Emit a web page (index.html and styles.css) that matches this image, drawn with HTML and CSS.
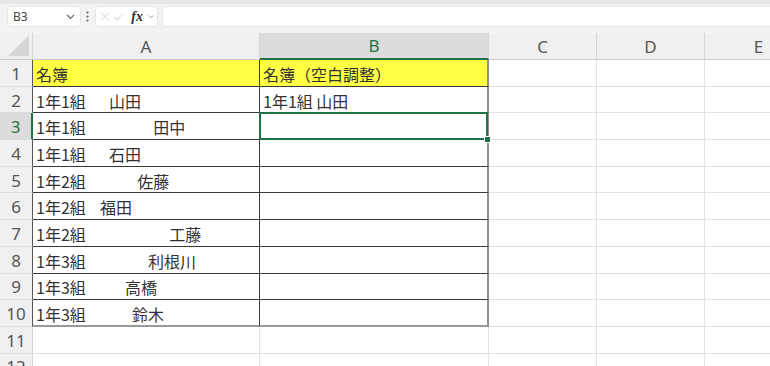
FILE: index.html
```html
<!DOCTYPE html>
<html lang="ja">
<head>
  <meta charset="UTF-8" />
  <title>名簿</title>
  <link rel="stylesheet" href="styles.css">
</head>
<body>

  <!-- Barra de fórmulas -->
  <div class="ribbon-edge"></div>
  <div class="formula-bar">
    <div class="name-box">
      <span>B3</span>
      <svg class="chev" width="9" height="6" viewBox="0 0 9 6"><polyline points="1,1 4.5,4.5 8,1" fill="none" stroke="#666" stroke-width="1.1"/></svg>
    </div>
    <svg class="grip" width="3" height="11" viewBox="0 0 3 11">
      <circle cx="1.5" cy="1.5" r="1.1" fill="#666"/>
      <circle cx="1.5" cy="5.5" r="1.1" fill="#666"/>
      <circle cx="1.5" cy="9.5" r="1.1" fill="#666"/>
    </svg>
    <div class="fx-box">
      <svg width="11" height="11" viewBox="0 0 11 11"><path d="M0.5,0.5 L10.5,10.5 M10.5,0.5 L0.5,10.5" stroke="#c4c4c4" stroke-width="1.1"/></svg>
      <svg width="12" height="10" viewBox="0 0 12 10"><polyline points="0.5,4.5 4.5,9 11.5,0.5" fill="none" stroke="#c4c4c4" stroke-width="1.1"/></svg>
      <span class="fx">fx</span>
      <svg class="chev" width="8" height="6" viewBox="0 0 8 6"><polyline points="1,1 4,4 7,1" fill="none" stroke="#777" stroke-width="1"/></svg>
    </div>
    <div class="formula-input"></div>
  </div>

  <!-- Hoja -->
  <div class="sheet">
    <div class="grid">
      <div class="ch corner"><svg width="21" height="21" viewBox="0 0 21 21"><polygon points="0,21 21,21 21,0" fill="#d6d6d6"/></svg></div>
      <div class="ch">A</div>
      <div class="ch ch-sel">B</div>
      <div class="ch">C</div>
      <div class="ch">D</div>
      <div class="ch">E</div>

      <div class="rh rh-b">1</div>
      <div class="c bx y">名簿</div>
      <div class="c bx bb y">名簿（空白調整）</div>
      <div class="c"></div><div class="c"></div><div class="c"></div>

      <div class="rh rh-b">2</div>
      <div class="c bx">1年1組　  山田</div>
      <div class="c bx bb">1年1組 山田</div>
      <div class="c"></div><div class="c"></div><div class="c"></div>

      <div class="rh rh-b rh-sel">3</div>
      <div class="c bx">1年1組　　　　 田中</div>
      <div class="c bx bb sel"></div>
      <div class="c"></div><div class="c"></div><div class="c"></div>

      <div class="rh rh-b">4</div>
      <div class="c bx">1年1組　  石田</div>
      <div class="c bx bb"></div>
      <div class="c"></div><div class="c"></div><div class="c"></div>

      <div class="rh rh-b">5</div>
      <div class="c bx">1年2組　　　 佐藤</div>
      <div class="c bx bb"></div>
      <div class="c"></div><div class="c"></div><div class="c"></div>

      <div class="rh rh-b">6</div>
      <div class="c bx">1年2組    福田</div>
      <div class="c bx bb"></div>
      <div class="c"></div><div class="c"></div><div class="c"></div>

      <div class="rh rh-b">7</div>
      <div class="c bx">1年2組　　　　　 工藤</div>
      <div class="c bx bb"></div>
      <div class="c"></div><div class="c"></div><div class="c"></div>

      <div class="rh rh-b">8</div>
      <div class="c bx">1年3組　　　    利根川</div>
      <div class="c bx bb"></div>
      <div class="c"></div><div class="c"></div><div class="c"></div>

      <div class="rh rh-b">9</div>
      <div class="c bx">1年3組　　  高橋</div>
      <div class="c bx bb"></div>
      <div class="c"></div><div class="c"></div><div class="c"></div>

      <div class="rh rh-b">10</div>
      <div class="c bx last">1年3組　　    鈴木</div>
      <div class="c bx bb last"></div>
      <div class="c"></div><div class="c"></div><div class="c"></div>

      <div class="rh">11</div>
      <div class="c"></div><div class="c"></div><div class="c"></div><div class="c"></div><div class="c"></div>

      <div class="rh">12</div>
      <div class="c"></div><div class="c"></div><div class="c"></div><div class="c"></div><div class="c"></div>
    </div>
  </div>

</body>
</html>
```

FILE: styles.css
```css
body {
  margin: 0;
  background: #f5f5f5;
  font-family: "Noto Sans", Arial, sans-serif;
  width: 770px;
  height: 366px;
  overflow: hidden;
}

.ribbon-edge {
  height: 4px;
  background: #e4e6e8;
}

.formula-bar {
  height: 29px;
  box-sizing: border-box;
  padding: 2px 0 0 7px;
  display: flex;
  align-items: flex-start;
  background: #f3f3f3;
}

.name-box {
  width: 74px;
  height: 21px;
  box-sizing: border-box;
  background: #fff;
  border: 1px solid #e6e6e6;
  border-radius: 4px;
  display: flex;
  align-items: center;
  justify-content: space-between;
  padding: 0 5px 0 5px;
  font-size: 12px;
  color: #444;
}

.grip {
  margin: 5px 6px 0 5px;
}

.fx-box {
  width: 63px;
  height: 21px;
  box-sizing: border-box;
  background: #fff;
  border: 1px solid #e6e6e6;
  border-radius: 4px;
  display: flex;
  align-items: center;
  gap: 5px;
  padding: 0 3px 0 5px;
}

.fx {
  font-family: "Liberation Serif", serif;
  font-style: italic;
  font-weight: bold;
  font-size: 14px;
  color: #333;
  margin-left: 3px;
}

.formula-input {
  flex: 1;
  height: 21px;
  margin-left: 4px;
  background: #fff;
  border: 1px solid #e6e6e6;
  border-right: none;
  border-radius: 4px 0 0 4px;
  box-sizing: border-box;
}

.sheet {
  width: 770px;
  overflow: hidden;
  background: #fff;
}

.grid {
  display: grid;
  grid-template-columns: 33px 227px 229px 108px 108px 108px;
  grid-template-rows: 27px;
  grid-auto-rows: 26.7px;
  width: 813px;
}

.grid > div {
  box-sizing: border-box;
}

.ch {
  background: #f0f0f0;
  border-right: 1px solid #d6d6d6;
  border-bottom: 1px solid #c8c8c8;
  display: flex;
  align-items: center;
  justify-content: center;
  font-size: 17px;
  color: #555;
}

.corner {
  align-items: flex-end;
  justify-content: flex-end;
  padding: 0 3px 3px 0;
}

.ch-sel {
  background: #dcdcdc;
  color: #1f7246;
  border-bottom: 2px solid #1f7246;
}

.rh {
  background: #f0f0f0;
  border-right: 1px solid #d6d6d6;
  border-bottom: 1px solid #dcdcdc;
  display: flex;
  align-items: center;
  justify-content: center;
  padding-top: 1px;
  font-size: 17px;
  color: #555;
}

.rh-b {
  border-right-color: #555;
}

.rh-sel {
  background: #dcdcdc;
  color: #1f7246;
  border-right: 2px solid #1f7246;
}

.c {
  border-right: 1px solid #e2e2e2;
  border-bottom: 1px solid #e2e2e2;
  display: flex;
  align-items: center;
  padding: 2px 0 0 3px;
  font-family: "Noto Sans CJK JP", sans-serif;
  font-size: 16px;
  line-height: 20px;
  color: #333;
  white-space: pre;
  overflow: hidden;
}

.bx {
  border-right-color: #3a3a3a;
  border-bottom-color: #3a3a3a;
}

.bb {
  border-right: 2px solid #8e8e8e;
}

.last {
  border-bottom: 2px solid #999;
}

.y {
  background: #ffff44;
}

.sel {
  position: relative;
  overflow: visible;
}

.sel::after {
  content: "";
  position: absolute;
  left: -1px;
  top: -1px;
  right: -1px;
  bottom: -1px;
  border: 2px solid #1f7246;
}

.sel::before {
  content: "";
  position: absolute;
  right: -4px;
  bottom: -4px;
  width: 5px;
  height: 5px;
  background: #1f7246;
  border: 1px solid #fff;
  z-index: 1;
}
```
